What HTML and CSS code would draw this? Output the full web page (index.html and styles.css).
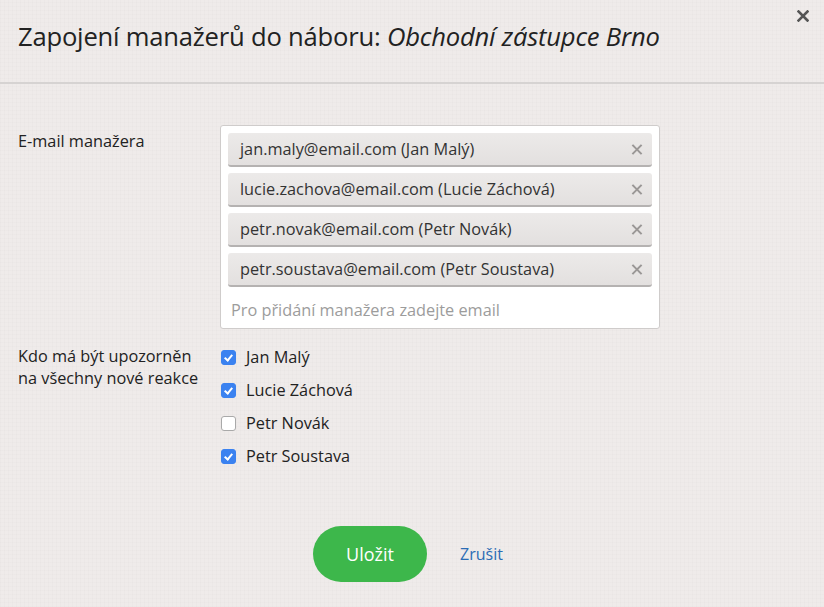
FILE: index.html
```html
<!DOCTYPE html>
<html lang="cs">
<head>
  <meta charset="UTF-8">
  <title>Zapojení manažerů do náboru</title>
  <link rel="stylesheet" href="styles.css">
</head>
<body>
<div class="modal">
  <div class="modal-head">
    <h1>Zapojení manažerů do náboru: <i>Obchodní zástupce Brno</i></h1>
    <a class="close" href="#" title="Zavřít">
      <svg width="12" height="12" viewBox="0 0 12 12"><path d="M1.5 1.5 L10.5 10.5 M10.5 1.5 L1.5 10.5" stroke="#555" stroke-width="2.6" stroke-linecap="square"/></svg>
    </a>
  </div>

  <div class="modal-body">
    <div class="row">
      <div class="label">E-mail manažera</div>
      <div class="tagbox">
        <div class="tag">jan.maly@email.com (Jan Malý)<span class="tag-x"></span></div>
        <div class="tag">lucie.zachova@email.com (Lucie Záchová)<span class="tag-x"></span></div>
        <div class="tag">petr.novak@email.com (Petr Novák)<span class="tag-x"></span></div>
        <div class="tag">petr.soustava@email.com (Petr Soustava)<span class="tag-x"></span></div>
        <input class="tag-input" type="text" placeholder="Pro přidání manažera zadejte email">
      </div>
    </div>

    <div class="row notify">
      <div class="label">Kdo má být upozorněn<br>na všechny nové reakce</div>
      <div class="checks">
        <label class="check"><span class="box on"></span>Jan Malý</label>
        <label class="check"><span class="box on"></span>Lucie Záchová</label>
        <label class="check"><span class="box"></span>Petr Novák</label>
        <label class="check"><span class="box on"></span>Petr Soustava</label>
      </div>
    </div>
  </div>

  <div class="modal-foot">
    <button class="btn-save">Uložit</button>
    <a class="cancel" href="#">Zrušit</a>
  </div>
</div>
</body>
</html>
```

FILE: styles.css
```css
body {
  margin: 0;
  font-family: "Open Sans", "Liberation Sans", sans-serif;
  color: #333;
  background-color: #efebea;
  background-image:
    repeating-linear-gradient(0deg, rgba(0,0,0,0.012) 0 1px, transparent 1px 4px),
    repeating-linear-gradient(90deg, rgba(0,0,0,0.012) 0 1px, transparent 1px 4px);
}

.modal {
  width: 824px;
  height: 607px;
}

.modal-head {
  position: relative;
  height: 82px;
  border-bottom: 2px solid #d6d3d2;
}

.modal-head h1 {
  margin: 0;
  padding: 19px 0 0 18px;
  font-size: 25.6px;
  font-weight: 400;
  letter-spacing: -0.2px;
  color: #222;
}

.modal-head h1 i {
  font-style: italic;
}

.close {
  position: absolute;
  top: 10px;
  right: 15px;
  display: block;
  line-height: 0;
}

.modal-body {
  padding: 41px 0 0 18px;
}

.row {
  display: flex;
}

.label {
  width: 202px;
  font-size: 16.3px;
  line-height: 22px;
  color: #222;
}

.row:first-child .label {
  padding-top: 5px;
}

.tagbox {
  width: 424px;
  padding: 7px 7px 0 7px;
  background: #fff;
  border: 1px solid #cfcccb;
  border-radius: 3px;
}

.tag {
  position: relative;
  height: 31px;
  line-height: 31px;
  margin-bottom: 6px;
  padding: 1px 0 0 12px;
  font-size: 16.3px;
  color: #333;
  background: linear-gradient(#eceae9, #e3e0df);
  border-bottom: 2px solid #b5b2b1;
  border-radius: 3px;
}

.tag-x {
  position: absolute;
  top: 11px;
  right: 10px;
  width: 11px;
  height: 11px;
}

.tag-x::before,
.tag-x::after {
  content: "";
  position: absolute;
  left: 5px;
  top: -1px;
  width: 2px;
  height: 13px;
  background: #9a9796;
  transform: rotate(45deg);
}

.tag-x::after {
  transform: rotate(-45deg);
}

.tag-input {
  display: block;
  width: 100%;
  height: 36px;
  margin-top: -1px;
  padding: 0 3px;
  box-sizing: border-box;
  border: 0;
  outline: 0;
  font-family: inherit;
  font-size: 16.3px;
  color: #333;
  background: transparent;
}

.tag-input::placeholder {
  color: #9c9c9c;
}

.notify {
  margin-top: 16px;
}

.checks {
  display: flex;
  flex-direction: column;
  gap: 11px;
  padding-top: 1px;
}

.check {
  display: flex;
  align-items: center;
  height: 22px;
  font-size: 16.3px;
  color: #222;
}

.box {
  position: relative;
  width: 13px;
  height: 13px;
  margin: 0 10px 0 1px;
  border: 1px solid #a9a9a9;
  border-radius: 3px;
  background: #fff;
}

.box.on {
  border-color: #3b82f0;
  background: #3b82f0;
}

.box.on::after {
  content: "";
  position: absolute;
  left: 4px;
  top: 2px;
  width: 3px;
  height: 6px;
  border: solid #fff;
  border-width: 0 2px 2px 0;
  transform: rotate(40deg);
}

.modal-foot {
  display: flex;
  align-items: center;
  padding: 59px 0 0 313px;
}

.btn-save {
  width: 114px;
  height: 56px;
  border: 0;
  border-radius: 28px;
  background: #3db74b;
  color: #fff;
  font-family: inherit;
  font-size: 18px;
  cursor: pointer;
}

.cancel {
  margin-left: 33px;
  font-size: 16px;
  color: #2b6cb5;
  text-decoration: none;
}
```
